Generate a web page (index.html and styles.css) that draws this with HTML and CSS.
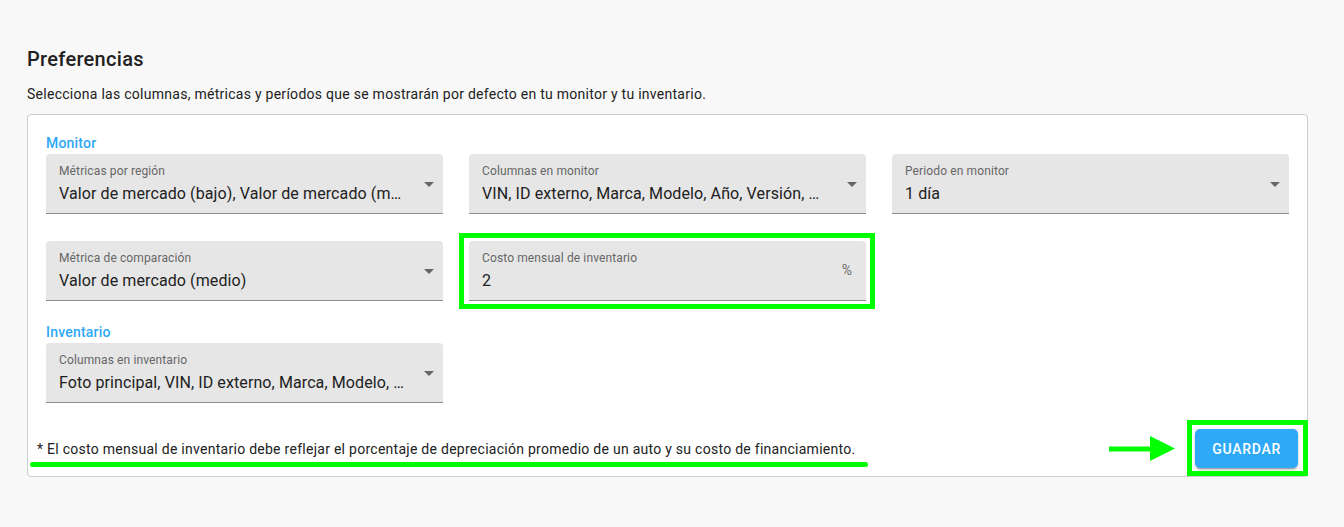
FILE: index.html
```html
<!DOCTYPE html>
<html lang="es">
<head>
  <meta charset="UTF-8">
  <meta name="viewport" content="width=device-width, initial-scale=1.0">
  <title>Preferencias</title>
  <link rel="stylesheet" href="styles.css">
</head>
<body>
  <div class="page">
    <h2 class="title">Preferencias</h2>
    <p class="subtitle">Selecciona las columnas, métricas y períodos que se mostrarán por defecto en tu monitor y tu inventario.</p>

    <div class="card">
      <div class="card-body">
        <div class="section-label">Monitor</div>
        <div class="fields">
          <div class="field">
            <span class="field-label">Métricas por región</span>
            <span class="field-value">Valor de mercado (bajo), Valor de mercado (m…</span>
            <span class="caret"></span>
          </div>
          <div class="field">
            <span class="field-label">Columnas en monitor</span>
            <span class="field-value">VIN, ID externo, Marca, Modelo, Año, Versión, …</span>
            <span class="caret"></span>
          </div>
          <div class="field">
            <span class="field-label">Periodo en monitor</span>
            <span class="field-value">1 día</span>
            <span class="caret"></span>
          </div>
          <div class="field">
            <span class="field-label">Métrica de comparación</span>
            <span class="field-value">Valor de mercado (medio)</span>
            <span class="caret"></span>
          </div>
          <div class="field field-input">
            <span class="field-label">Costo mensual de inventario</span>
            <span class="field-value">2</span>
            <span class="adornment">%</span>
            <!-- annotation -->
            <span class="highlight"></span>
          </div>
        </div>

        <div class="section-label section-gap">Inventario</div>
        <div class="fields">
          <div class="field">
            <span class="field-label">Columnas en inventario</span>
            <span class="field-value">Foto principal, VIN, ID externo, Marca, Modelo, …</span>
            <span class="caret"></span>
          </div>
        </div>
      </div>

      <div class="card-footer">
        <p class="footnote">* El costo mensual de inventario debe reflejar el porcentaje de depreciación promedio de un auto y su costo de financiamiento.<span class="underline"></span></p>
        <div class="save-wrap">
          <svg class="arrow" width="66" height="26" viewBox="0 0 66 26">
            <line x1="0" y1="14" x2="44" y2="14" stroke="#00ff00" stroke-width="5"/>
            <polygon points="41,1 66,13.5 41,26" fill="#00ff00"/>
          </svg>
          <button class="save">GUARDAR</button>
          <span class="highlight highlight-btn"></span>
        </div>
      </div>
    </div>
  </div>
</body>
</html>
```

FILE: styles.css
```css
body {
  margin: 0;
  background-color: #f8f8f8;
  font-family: Roboto, "Liberation Sans", Arial, sans-serif;
  color: #212121;
}

.page {
  padding: 43px 36px 0 27px;
}

.title {
  margin: 0;
  font-size: 20px;
  line-height: 32px;
  font-weight: 500;
  letter-spacing: 0.3px;
}

.subtitle {
  margin: 9px 0 10px;
  font-size: 14px;
  line-height: 20px;
  letter-spacing: 0.27px;
}

.card {
  background-color: #fff;
  border: 1px solid #cccccc;
  border-radius: 4px;
}

.card-body {
  padding: 18px 18px 26px;
}

.section-label {
  font-size: 14px;
  line-height: 20px;
  font-weight: 500;
  letter-spacing: 0.2px;
  color: #2ea8f6;
  margin-bottom: 1px;
}

.section-gap {
  margin-top: 21px;
  margin-bottom: 1px;
}

.fields {
  display: grid;
  grid-template-columns: repeat(3, minmax(0, 1fr));
  column-gap: 26px;
  row-gap: 27px;
}

.field {
  position: relative;
  display: flex;
  flex-direction: column;
  min-width: 0;
  box-sizing: border-box;
  height: 60px;
  padding: 9px 32px 0 13px;
  background-color: #e6e6e6;
  border-radius: 4px 4px 0 0;
  border-bottom: 1px solid #8c8c8c;
}

.field-label {
  font-size: 12px;
  line-height: 16px;
  letter-spacing: 0.12px;
  color: #666;
  white-space: nowrap;
}

.field-value {
  margin-top: 3px;
  font-size: 16px;
  line-height: 24px;
  letter-spacing: 0.1px;
  color: #212121;
  white-space: nowrap;
  overflow: hidden;
  text-overflow: ellipsis;
}

.caret {
  position: absolute;
  right: 9px;
  top: 28px;
  width: 0;
  height: 0;
  border-left: 5.5px solid transparent;
  border-right: 5.5px solid transparent;
  border-top: 5px solid #666;
}

.field-input {
  padding-right: 40px;
}

.adornment {
  position: absolute;
  right: 14px;
  top: 19px;
  font-size: 14px;
  line-height: 20px;
  color: #6b6b6b;
}

/* green annotations */
.highlight {
  position: absolute;
  top: -8px;
  left: -10px;
  right: -9px;
  bottom: -9px;
  border: 5px solid #00ff00;
  pointer-events: none;
}

.card-footer {
  display: flex;
  align-items: center;
  justify-content: space-between;
  padding: 0 9px 8px;
}

.footnote {
  position: relative;
  margin: 0;
  font-size: 14px;
  line-height: 20px;
  letter-spacing: 0.27px;
  color: #212121;
}

.underline {
  position: absolute;
  left: -7px;
  top: 23px;
  width: 838px;
  height: 5px;
  border-radius: 3px;
  background-color: #00ff00;
}

.save-wrap {
  position: relative;
}

.arrow {
  position: absolute;
  left: -86px;
  top: 6px;
}

.save {
  display: block;
  height: 39px;
  padding: 0 17px;
  border: none;
  border-radius: 5px;
  background-color: #2ea9f7;
  color: #fff;
  font-family: Roboto, "Liberation Sans", Arial, sans-serif;
  font-size: 14px;
  font-weight: 500;
  letter-spacing: 0.7px;
  box-shadow: 0 3px 1px -2px rgba(0,0,0,0.2), 0 2px 2px 0 rgba(0,0,0,0.14), 0 1px 5px 0 rgba(0,0,0,0.12);
  cursor: pointer;
}

.highlight-btn {
  top: -9px;
  left: -8px;
  right: -10px;
  bottom: -8px;
}
```
